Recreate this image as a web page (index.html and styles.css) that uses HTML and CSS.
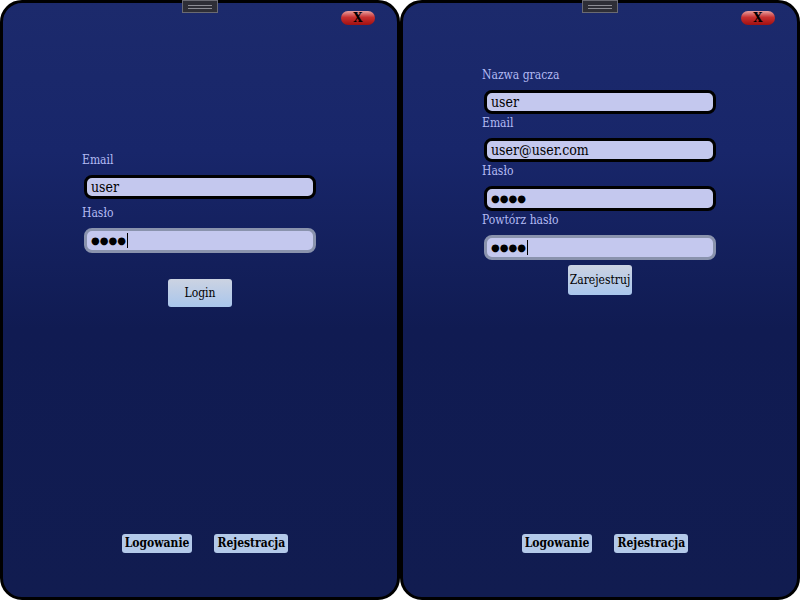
FILE: index.html
```html
<!DOCTYPE html>
<html lang="pl">
<head>
<meta charset="utf-8">
<title>Logowanie</title>
<link rel="stylesheet" href="styles.css">
</head>
<body>
<div class="desk">
  <section class="panel">
    <div class="grip"><span></span><span></span></div>
    <div class="close">X</div>
    <div class="form form-login">
      <div class="label">Email</div>
      <div class="field">user</div>
      <div class="label">Hasło</div>
      <div class="field focused"><span class="dots">●●●●</span><span class="caret"></span></div>
      <div class="actions"><button class="btn btn-login">Login</button></div>
    </div>
    <nav class="tabs">
      <button class="tab">Logowanie</button>
      <button class="tab">Rejestracja</button>
    </nav>
  </section>
  <section class="panel">
    <div class="grip"><span></span><span></span></div>
    <div class="close">X</div>
    <div class="form form-register">
      <div class="label">Nazwa gracza</div>
      <div class="field">user</div>
      <div class="label">Email</div>
      <div class="field">user@user.com</div>
      <div class="label">Hasło</div>
      <div class="field tall"><span class="dots">●●●●</span></div>
      <div class="label">Powtórz hasło</div>
      <div class="field focused"><span class="dots">●●●●</span><span class="caret"></span></div>
      <div class="actions"><button class="btn btn-register">Zarejestruj</button></div>
    </div>
    <nav class="tabs">
      <button class="tab">Logowanie</button>
      <button class="tab">Rejestracja</button>
    </nav>
  </section>
</div>
</body>
</html>
```
FILE: styles.css
```css
* { box-sizing: border-box; }
html, body { margin: 0; padding: 0; background: #ffffff; }
body { width: 800px; height: 600px; overflow: hidden; font-family: "DejaVu Serif Condensed", "DejaVu Serif", serif; }
.desk { display: flex; width: 800px; height: 600px; }
.panel {
  position: relative;
  width: 400px;
  height: 600px;
  border: 3px solid #000;
  border-radius: 22px;
  background: linear-gradient(#1c2a6c 0%, #18266a 25%, #101b52 55%, #111c50 100%);
  display: flex;
  flex-direction: column;
}
.grip {
  position: absolute;
  top: -3px;
  left: 179px;
  width: 36px;
  height: 13px;
  background: #2e2e36;
  border: 1px solid #6a6a72;
  display: flex;
  flex-direction: column;
  align-items: center;
  justify-content: center;
  gap: 2px;
}
.grip span { display: block; width: 24px; height: 1px; background: #8c8c94; }
.close {
  position: absolute;
  top: 8px;
  left: 338px;
  width: 34px;
  height: 14px;
  border-radius: 7px;
  background: linear-gradient(#e8a0a0 0%, #c83030 45%, #a01010 100%);
  color: #000;
  font-family: "DejaVu Serif", serif;
  font-weight: bold;
  font-size: 12px;
  line-height: 14px;
  text-align: center;
}
.form { margin-left: 79px; width: 236px; display: flex; flex-direction: column; }
.form-login { margin-top: 149px; }
.form-register { margin-top: 64px; }
.label {
  color: #b3bbf3;
  font-size: 12px;
  line-height: 16px;
  height: 16px;
}
.field {
  margin-left: 2px;
  width: 232px;
  height: 24px;
  border: 3px solid #000;
  border-radius: 8px;
  background: #c4c8ee;
  color: #000;
  font-size: 14px;
  line-height: 18px;
  padding-left: 4px;
  display: flex;
  align-items: center;
}
.field.tall { height: 25px; }
.field.focused { border-color: #8a93ad; height: 25px; }
.dots { font-family: "DejaVu Sans", sans-serif; font-size: 10px; }
.caret { display: inline-block; width: 1px; height: 15px; background: #000; margin-left: 1px; }
.form-login .label { margin-top: 6px; }
.form-login .label:first-child { margin-top: 0; }
.form-login .field { margin-top: 7px; }
.form-register .label { margin-top: 1px; }
.form-register .label:first-child { margin-top: 0; }
.form-register .field { margin-top: 7px; }
.actions { display: flex; justify-content: center; }
.btn {
  font-family: "DejaVu Serif Condensed", "DejaVu Serif", serif;
  font-size: 12px;
  color: #000;
  border: none;
  border-radius: 3px;
  background: linear-gradient(#ccd3e2, #a9c6ec);
  padding: 0;
}
.btn-login { margin-top: 26px; width: 64px; height: 28px; }
.btn-register { margin-top: 5px; width: 64px; height: 30px; }
.tabs {
  margin-top: auto;
  margin-bottom: 44px;
  display: flex;
  justify-content: center;
  gap: 22px;
  padding-left: 10px;
}
.tab {
  font-family: "DejaVu Serif Condensed", "DejaVu Serif", serif;
  font-weight: bold;
  font-size: 12px;
  color: #000;
  background: #b3c9e9;
  border: none;
  border-radius: 3px;
  height: 19px;
  padding: 0 3px;
  line-height: 19px;
}
```
